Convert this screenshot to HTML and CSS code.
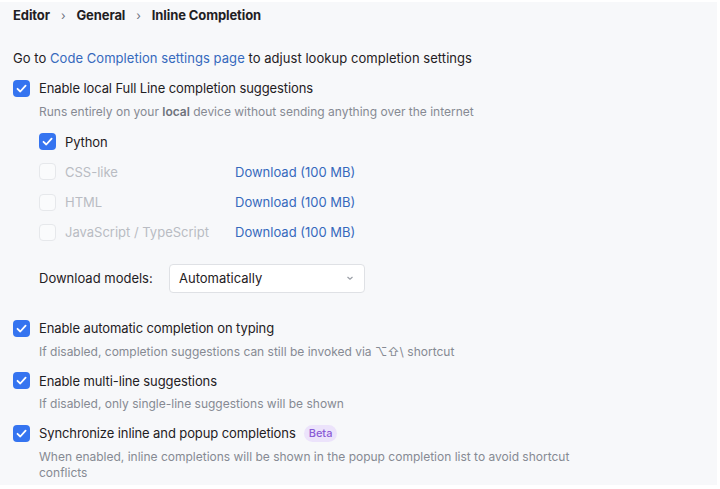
FILE: index.html
```html
<!DOCTYPE html>
<html>
<head>
<meta charset="utf-8">
<link rel="stylesheet" href="styles.css">
</head>
<body>
<div class="panel">
  <div class="crumbs">
    <span>Editor</span><span class="sep">›</span><span>General</span><span class="sep">›</span><span>Inline Completion</span>
  </div>
  <div class="goto">Go to <span class="link">Code Completion settings page</span> to adjust lookup completion settings</div>

  <div class="opt first">
    <div class="row"><span class="cb on"><svg viewBox="0 0 17 17"><path d="M4.5 8.8 L7.3 11.5 L12.6 5.6" /></svg></span><span class="lbl">Enable local Full Line completion suggestions</span></div>
    <div class="desc">Runs entirely on your <b>local</b> device without sending anything over the internet</div>
  </div>

  <div class="langs">
    <div class="lang"><span class="cb on"><svg viewBox="0 0 17 17"><path d="M4.5 8.8 L7.3 11.5 L12.6 5.6" /></svg></span><span class="lbl">Python</span></div>
    <div class="lang"><span class="cb off"></span><span class="lbl dis">CSS-like</span><span class="link">Download (100 MB)</span></div>
    <div class="lang"><span class="cb off"></span><span class="lbl dis">HTML</span><span class="link">Download (100 MB)</span></div>
    <div class="lang"><span class="cb off"></span><span class="lbl dis">JavaScript / TypeScript</span><span class="link">Download (100 MB)</span></div>
    <div class="models">
      <span class="mlbl">Download models:</span>
      <div class="select"><span>Automatically</span><svg viewBox="0 0 10 10"><path d="M2.5 4 L5 6.3 L7.5 4" /></svg></div>
    </div>
  </div>

  <div class="opt after-langs">
    <div class="row"><span class="cb on"><svg viewBox="0 0 17 17"><path d="M4.5 8.8 L7.3 11.5 L12.6 5.6" /></svg></span><span class="lbl">Enable automatic completion on typing</span></div>
    <div class="desc">If disabled, completion suggestions can still be invoked via ⌥⇧\ shortcut</div>
  </div>
  <div class="opt">
    <div class="row"><span class="cb on"><svg viewBox="0 0 17 17"><path d="M4.5 8.8 L7.3 11.5 L12.6 5.6" /></svg></span><span class="lbl">Enable multi-line suggestions</span></div>
    <div class="desc">If disabled, only single-line suggestions will be shown</div>
  </div>
  <div class="opt">
    <div class="row"><span class="cb on"><svg viewBox="0 0 17 17"><path d="M4.5 8.8 L7.3 11.5 L12.6 5.6" /></svg></span><span class="lbl">Synchronize inline and popup completions</span><span class="beta">Beta</span></div>
    <div class="desc wrap">When enabled, inline completions will be shown in the popup completion list to avoid shortcut conflicts</div>
  </div>
</div>
</body>
</html>
```

FILE: styles.css
```css
html, body {
  margin: 0;
  padding: 0;
  background: #ffffff;
}
body {
  width: 720px;
  height: 489px;
  overflow: hidden;
  font-family: Inter, "Noto Sans", sans-serif;
  color: #1f2023;
}
.panel {
  margin: 2px 3px 0 0;
  height: 483px;
  background: #f7f8fa;
  padding: 0 0 0 13px;
  box-sizing: border-box;
  overflow: hidden;
}
.crumbs {
  display: flex;
  align-items: center;
  height: 26px;
  font-size: 13px;
  font-weight: 700;
  letter-spacing: -0.1px;
}
.crumbs .sep {
  font-weight: 400;
  color: #6c707e;
  margin: 0 11px;
  font-size: 12px;
}
.goto {
  margin-top: 21px;
  font-size: 13px;
  line-height: 18px;
  letter-spacing: 0.05px;
}
.link {
  color: #3669bd;
}
.opt {
  margin-top: 12px;
}
.opt.first {
  margin-top: 12px;
}
.opt.after-langs {
  margin-top: 26.5px;
}
.row {
  display: flex;
  align-items: center;
  height: 18px;
}
.cb {
  width: 17px;
  height: 17px;
  box-sizing: border-box;
  border-radius: 4px;
  flex: none;
  display: flex;
  align-items: center;
  justify-content: center;
}
.cb.on {
  background: #3574f0;
}
.cb.on svg {
  width: 17px;
  height: 17px;
  fill: none;
  stroke: #ffffff;
  stroke-width: 1.8;
  stroke-linecap: round;
  stroke-linejoin: round;
}
.cb.off {
  border: 1px solid #e6e8eb;
  background: #fafbfc;
}
.lbl {
  margin-left: 9px;
  font-size: 13px;
  letter-spacing: -0.1px;
}
.lbl.dis {
  color: #b9bcc3;
  width: 170px;
  letter-spacing: 0;
}
.desc {
  margin: 6.5px 0 0 26px;
  font-size: 12px;
  line-height: 16px;
  color: #868a93;
}
.desc b {
  font-weight: 600;
  color: #6f737c;
}
.desc.wrap {
  width: 540px;
}
.beta {
  margin-left: 8px;
  background: #ece3fb;
  color: #8a5bd6;
  font-size: 11px;
  font-weight: 500;
  padding: 0 5px;
  border-radius: 9px;
  line-height: 17px;
  height: 17px;
}
.langs {
  margin: 13px 0 0 26px;
}
.lang {
  display: flex;
  align-items: center;
  height: 18px;
  margin-bottom: 12.33px;
  font-size: 13px;
}
.models {
  display: flex;
  align-items: center;
  margin-top: 22.5px;
  font-size: 13px;
}
.mlbl {
  width: 130px;
}
.select {
  width: 196px;
  height: 29px;
  box-sizing: border-box;
  border: 1px solid #dfe1e5;
  border-radius: 4px;
  background: #ffffff;
  display: flex;
  align-items: center;
  justify-content: space-between;
  padding: 0 9px 0 9px;
}
.select svg {
  width: 10px;
  height: 10px;
  fill: none;
  stroke: #9a9ea6;
  stroke-width: 1.2;
}
```
